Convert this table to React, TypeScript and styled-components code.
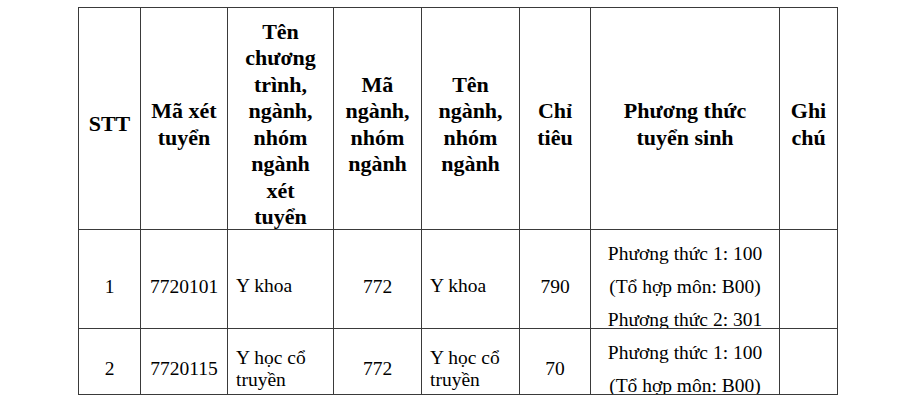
import React from "react";
import styled, { createGlobalStyle } from "styled-components";

const GlobalStyle = createGlobalStyle`
  html, body {
    margin: 0;
    padding: 0;
    background: #fff;
  }
  body {
    color: #000;
  }
`;

const serif = `"Liberation Serif", "Times New Roman", Tinos, "DejaVu Serif", serif`;

const Page = styled.div`
  padding: 7px 0 0 78px;
  height: 413px;
  box-sizing: border-box;
  overflow: hidden;
  font-family: ${serif};
`;

const Grid = styled.div`
  display: inline-grid;
  grid-template-columns: 61px 86px 105px 87px 97px 70px 188px 57px;
  grid-template-rows: 221px 98px 65px;
  gap: 1px;
  padding: 1px;
  background: #3a3a3a;
`;

const Cell = styled.div<{ $align?: "left" | "center"; $lh?: number }>`
  background: #fff;
  overflow: hidden;
  min-height: 0;
  display: flex;
  flex-direction: column;
  justify-content: center;
  align-items: ${p => (p.$align === "left" ? "flex-start" : "center")};
  text-align: ${p => p.$align ?? "center"};
  box-sizing: border-box;
  padding: 14px 8px 0 8px;
  font-family: ${serif};
  font-size: 19.5px;
  line-height: ${p => p.$lh ?? 33}px;
`;

const HeadCell = styled(Cell)<{ $px?: number }>`
  font-weight: bold;
  font-size: 22px;
  line-height: 26.5px;
  padding: 12px ${p => p.$px ?? 8}px 0;
`;

const headers: { text: string; px?: number }[] = [
  { text: "STT" },
  { text: "Mã xét tuyển" },
  { text: "Tên chương trình, ngành, nhóm ngành xét tuyển", px: 12 },
  { text: "Mã ngành, nhóm ngành" },
  { text: "Tên ngành, nhóm ngành" },
  { text: "Chỉ tiêu" },
  { text: "Phương thức tuyển sinh" },
  { text: "Ghi chú" },
];

type Row = {
  stt: string;
  code: string;
  program: string;
  groupCode: string;
  groupName: string;
  quota: string;
  methods: string[];
};

const rows: Row[] = [
  {
    stt: "1",
    code: "7720101",
    program: "Y khoa",
    groupCode: "772",
    groupName: "Y khoa",
    quota: "790",
    methods: ["Phương thức 1: 100", "(Tổ hợp môn: B00)", "Phương thức 2: 301"],
  },
  {
    stt: "2",
    code: "7720115",
    program: "Y học cổ truyền",
    groupCode: "772",
    groupName: "Y học cổ truyền",
    quota: "70",
    methods: ["Phương thức 1: 100", "(Tổ hợp môn: B00)"],
  },
];

export default function App() {
  return (
    <>
      <GlobalStyle />
      <Page>
        <Grid>
          {headers.map(h => (
            <HeadCell key={h.text} $px={h.px}>{h.text}</HeadCell>
          ))}
          {rows.map(r => (
            <React.Fragment key={r.stt}>
              <Cell>{r.stt}</Cell>
              <Cell>{r.code}</Cell>
              <Cell $align="left" $lh={22}>{r.program}</Cell>
              <Cell>{r.groupCode}</Cell>
              <Cell $align="left" $lh={22}>{r.groupName}</Cell>
              <Cell>{r.quota}</Cell>
              <Cell>
                {r.methods.map(m => (
                  <div key={m}>{m}</div>
                ))}
              </Cell>
              <Cell />
            </React.Fragment>
          ))}
        </Grid>
      </Page>
    </>
  );
}
